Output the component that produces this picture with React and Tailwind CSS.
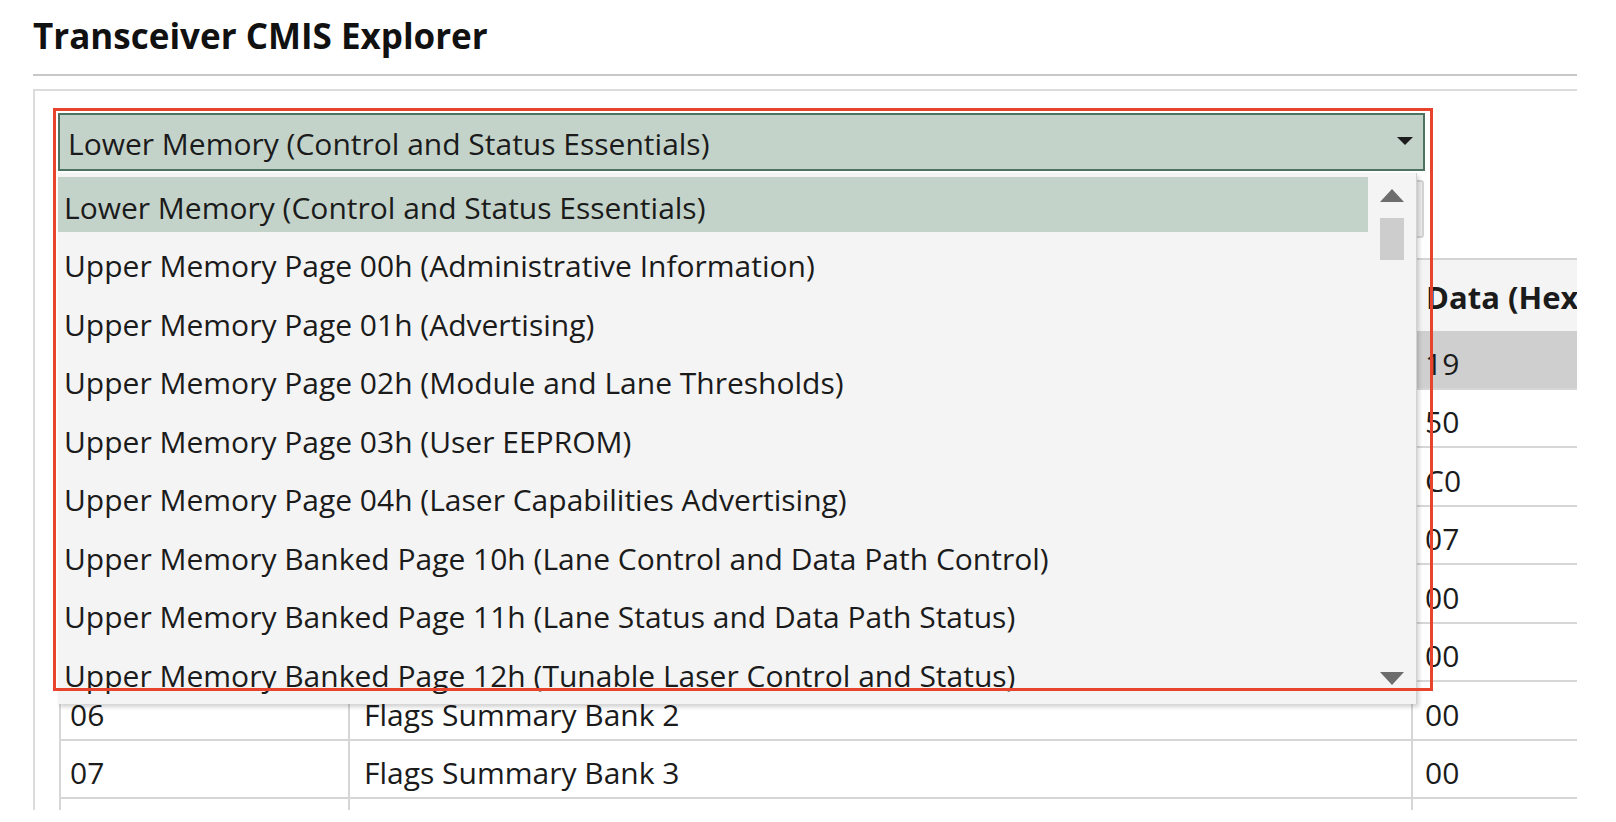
const pages = [
  "Lower Memory (Control and Status Essentials)",
  "Upper Memory Page 00h (Administrative Information)",
  "Upper Memory Page 01h (Advertising)",
  "Upper Memory Page 02h (Module and Lane Thresholds)",
  "Upper Memory Page 03h (User EEPROM)",
  "Upper Memory Page 04h (Laser Capabilities Advertising)",
  "Upper Memory Banked Page 10h (Lane Control and Data Path Control)",
  "Upper Memory Banked Page 11h (Lane Status and Data Path Status)",
  "Upper Memory Banked Page 12h (Tunable Laser Control and Status)",
  "Upper Memory Banked Page 13h (Module Performance Diagnostics Control)",
];

const rows = [
  ["00", "Identifier", "19"],
  ["01", "Revision Compliance", "50"],
  ["02", "Module Characteristics", "C0"],
  ["03", "Module State", "07"],
  ["04", "Flags Summary Bank 0", "00"],
  ["05", "Flags Summary Bank 1", "00"],
  ["06", "Flags Summary Bank 2", "00"],
  ["07", "Flags Summary Bank 3", "00"],
  ["08", "Module Level Flags", "00"],
];

function Triangle({ up, className }) {
  return (
    <svg width="24" height="13" viewBox="0 0 24 13" className={className}>
      {up ? <polygon points="12,0 24,13 0,13" fill="currentColor" /> : <polygon points="0,0 24,0 12,13" fill="currentColor" />}
    </svg>
  );
}

export default function App() {
  return (
    <div className="w-[1616px] h-[822px] bg-white overflow-hidden font-['Open_Sans',sans-serif] text-[#1b1b1b]">
      <div className="pl-[33px]">
        <h1 className="pt-[12px] text-[35px] leading-[47px] font-bold text-[#111]">Transceiver CMIS Explorer</h1>
        <div className="mt-[15px] h-[2px] w-[1544px] bg-[#c8c8c8]" />

        {/* main panel */}
        <div className="relative mt-[13px] w-[1544px] h-[721px] border-l-2 border-t-2 border-[#dcdcdc] overflow-hidden">
          <div className="pl-[23px] pt-[22px]">

            {/* page selector */}
            <div className="relative z-10">
              <div className="w-[1367px] h-[58px] border-2 border-[#4d725f] bg-[#c4d3ca] flex items-center pl-[8px] pr-[10px] pt-[4px]">
                <span className="flex-1 text-[30px] leading-[40px]">{pages[0]}</span>
                <svg width="16" height="8" viewBox="0 0 16 8" className="text-[#1c1c1c] -mt-[6px]">
                  <polygon points="0,0 16,0 8,8" fill="currentColor" />
                </svg>
              </div>

              {/* open dropdown */}
              <div className="absolute top-[60px] left-0 w-[1359px] h-[531px] bg-[#f4f4f4] border-r border-[#d2d2d2] shadow-[2px_3px_4px_rgba(0,0,0,0.18)] flex overflow-hidden">
                <div className="w-[1311px] pt-[4px]">
                  {pages.map((p, i) => (
                    <div
                      key={p}
                      className={`h-[55px] mb-[3.5px] flex items-center pl-[6px] pt-[6px] text-[30px] leading-[40px] whitespace-nowrap ${i === 0 ? "bg-[#c4d3ca]" : ""}`}
                    >
                      {p}
                    </div>
                  ))}
                </div>
                <div className="w-[48px] flex flex-col items-center pt-[16px] pb-[19px] text-[#6d6d6d]">
                  <Triangle up />
                  <div className="mt-[16px] w-[24px] h-[42px] bg-[#cdcdcd]" />
                  <Triangle className="mt-auto" />
                </div>
              </div>
            </div>

            {/* controls row (hidden behind dropdown) */}
            <div className="mt-[9px] w-[1366px] h-[60px] flex justify-end">
              <div className="w-[180px] h-[58px] rounded-[3px] border-2 border-[#d3d3d3] bg-[#ececec]" />
            </div>

            {/* register table */}
            <div className="mt-[18px] ml-[1px] w-[1774px]">
              <div className="grid grid-cols-[291px_1063px_420px] h-[73px] border-t-2 border-[#d4d4d4] bg-[#f4f4f4] font-bold text-[31px]">
                <div className="border-l-2 border-r-2 border-[#d6d6d6] flex items-center pl-[9px] pt-[4px]">Offset</div>
                <div className="border-r-2 border-[#d6d6d6] flex items-center pl-[14px] pt-[4px]">Field</div>
                <div className="flex items-center pl-[13px] pt-[4px]">Data (Hex)</div>
              </div>
              {rows.map((r, i) => (
                <div
                  key={r[0]}
                  className={`grid grid-cols-[291px_1063px_420px] h-[58.5px] border-b-2 border-[#d6d6d6] text-[30px] ${i === 0 ? "bg-[#cfcfcf]" : ""}`}
                >
                  <div className="border-l-2 border-r-2 border-[#d6d6d6] flex items-center pl-[9px] pt-[8px]">{r[0]}</div>
                  <div className="border-r-2 border-[#d6d6d6] flex items-center pl-[14px] pt-[8px]">{r[1]}</div>
                  <div className="flex items-center pl-[12px] pt-[8px]">{r[2]}</div>
                </div>
              ))}
            </div>
          </div>

          {/* highlight annotation */}
          <div className="absolute left-[18px] top-[17px] w-[1380px] h-[583px] border-[3px] border-[#e8432d] z-20 pointer-events-none" />
        </div>
      </div>
    </div>
  );
}
